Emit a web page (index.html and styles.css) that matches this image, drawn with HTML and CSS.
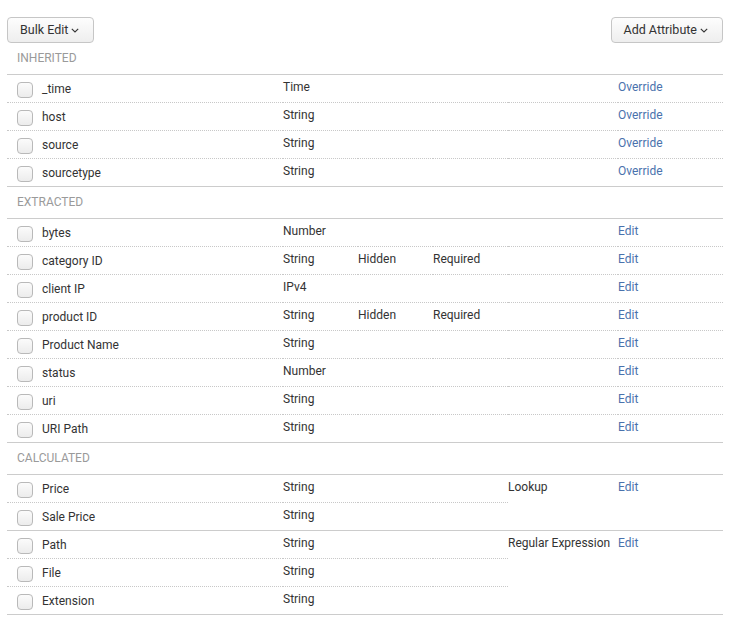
FILE: index.html
```html
<!DOCTYPE html>
<html lang="en">
<head>
<meta charset="utf-8">
<title>Attributes</title>
<link rel="stylesheet" href="styles.css">
</head>
<body>
<div class="page">
  <div class="toolbar">
    <button class="btn" type="button">Bulk Edit<svg class="chev" viewBox="0 0 8 5" width="8" height="5"><path d="M0.8 0.8 L4 4 L7.2 0.8" /></svg></button>
    <button class="btn" type="button">Add Attribute<svg class="chev" viewBox="0 0 8 5" width="8" height="5"><path d="M0.8 0.8 L4 4 L7.2 0.8" /></svg></button>
  </div>

  <div class="group-head">Inherited</div>
  <table class="attrs">
    <colgroup><col class="c-name"><col class="c-type"><col class="c-flag"><col class="c-flag"><col class="c-calc"><col class="c-act"></colgroup>
    <tbody>
      <tr><td><div class="field"><span class="cb"></span><span>_time</span></div></td><td>Time</td><td></td><td></td><td></td><td><a class="link">Override</a></td></tr>
      <tr><td><div class="field"><span class="cb"></span><span>host</span></div></td><td>String</td><td></td><td></td><td></td><td><a class="link">Override</a></td></tr>
      <tr><td><div class="field"><span class="cb"></span><span>source</span></div></td><td>String</td><td></td><td></td><td></td><td><a class="link">Override</a></td></tr>
      <tr class="last"><td><div class="field"><span class="cb"></span><span>sourcetype</span></div></td><td>String</td><td></td><td></td><td></td><td><a class="link">Override</a></td></tr>
    </tbody>
  </table>

  <div class="group-head">Extracted</div>
  <table class="attrs">
    <colgroup><col class="c-name"><col class="c-type"><col class="c-flag"><col class="c-flag"><col class="c-calc"><col class="c-act"></colgroup>
    <tbody>
      <tr><td><div class="field"><span class="cb"></span><span>bytes</span></div></td><td>Number</td><td></td><td></td><td></td><td><a class="link">Edit</a></td></tr>
      <tr><td><div class="field"><span class="cb"></span><span>category ID</span></div></td><td>String</td><td>Hidden</td><td>Required</td><td></td><td><a class="link">Edit</a></td></tr>
      <tr><td><div class="field"><span class="cb"></span><span>client IP</span></div></td><td>IPv4</td><td></td><td></td><td></td><td><a class="link">Edit</a></td></tr>
      <tr><td><div class="field"><span class="cb"></span><span>product ID</span></div></td><td>String</td><td>Hidden</td><td>Required</td><td></td><td><a class="link">Edit</a></td></tr>
      <tr><td><div class="field"><span class="cb"></span><span>Product Name</span></div></td><td>String</td><td></td><td></td><td></td><td><a class="link">Edit</a></td></tr>
      <tr><td><div class="field"><span class="cb"></span><span>status</span></div></td><td>Number</td><td></td><td></td><td></td><td><a class="link">Edit</a></td></tr>
      <tr><td><div class="field"><span class="cb"></span><span>uri</span></div></td><td>String</td><td></td><td></td><td></td><td><a class="link">Edit</a></td></tr>
      <tr class="last"><td><div class="field"><span class="cb"></span><span>URI Path</span></div></td><td>String</td><td></td><td></td><td></td><td><a class="link">Edit</a></td></tr>
    </tbody>
  </table>

  <div class="group-head">Calculated</div>
  <table class="attrs">
    <colgroup><col class="c-name"><col class="c-type"><col class="c-flag"><col class="c-flag"><col class="c-calc"><col class="c-act"></colgroup>
    <tbody>
      <tr><td><div class="field"><span class="cb"></span><span>Price</span></div></td><td>String</td><td></td><td></td><td class="span" rowspan="2">Lookup</td><td class="span" rowspan="2"><a class="link">Edit</a></td></tr>
      <tr class="last"><td><div class="field"><span class="cb"></span><span>Sale Price</span></div></td><td>String</td><td></td><td></td></tr>
      <tr><td><div class="field"><span class="cb"></span><span>Path</span></div></td><td>String</td><td></td><td></td><td class="span" rowspan="3">Regular Expression</td><td class="span" rowspan="3"><a class="link">Edit</a></td></tr>
      <tr><td><div class="field"><span class="cb"></span><span>File</span></div></td><td>String</td><td></td><td></td></tr>
      <tr class="last"><td><div class="field"><span class="cb"></span><span>Extension</span></div></td><td>String</td><td></td><td></td></tr>
    </tbody>
  </table>
</div>
</body>
</html>
```

FILE: styles.css
```css
* { box-sizing: border-box; }

body {
  margin: 0;
  background: #fff;
  color: #333;
  font-family: Roboto, "Liberation Sans", Arial, sans-serif;
  font-size: 12px;
}

.page {
  width: 731px;
  padding: 17px 8px 0 7px;
}

.toolbar {
  display: flex;
  justify-content: space-between;
  height: 26px;
}

.btn {
  display: inline-flex;
  align-items: center;
  gap: 3px;
  height: 26px;
  padding: 0 14px 0 12px;
  border: 1px solid #c6c6c6;
  border-radius: 4px;
  background: linear-gradient(#fdfdfd, #eeeeee);
  color: #333;
  font-family: inherit;
  font-size: 12.5px;
  line-height: 16px;
  cursor: pointer;
}

.chev {
  fill: none;
  stroke: #333;
  stroke-width: 1.1;
  margin-top: 1px;
}

.group-head {
  width: 716px;
  padding: 7px 0 8px 10px;
  line-height: 16px;
  border-bottom: 1px solid #cccccc;
  color: #9a9a9a;
  text-transform: uppercase;
}

.attrs {
  width: 716px;
  table-layout: fixed;
  border-collapse: separate;
  border-spacing: 0;
}

.c-name { width: 276px; }
.c-type { width: 75px; }
.c-flag { width: 75px; }
.c-calc { width: 110px; }
.c-act { width: 105px; }

.attrs tr { height: 28px; }

.attrs td {
  padding: 4px 0 0 0;
  vertical-align: top;
  line-height: 16px;
  border-bottom: 1px dotted #c8c8c8;
  white-space: nowrap;
}

.attrs tr.last td,
.attrs td.span {
  border-bottom: 1px solid #cccccc;
}

.attrs td:first-child { padding: 6px 0 0 10px; }

.field {
  display: flex;
  align-items: flex-start;
  gap: 9px;
}

.cb {
  width: 16px;
  height: 16px;
  margin-top: 1px;
  border: 1px solid #b9b9b9;
  border-radius: 4px;
  background: linear-gradient(#fbfbfb, #ececec);
  flex: none;
}

.link {
  color: #4a72ad;
  text-decoration: none;
  cursor: pointer;
}
```
